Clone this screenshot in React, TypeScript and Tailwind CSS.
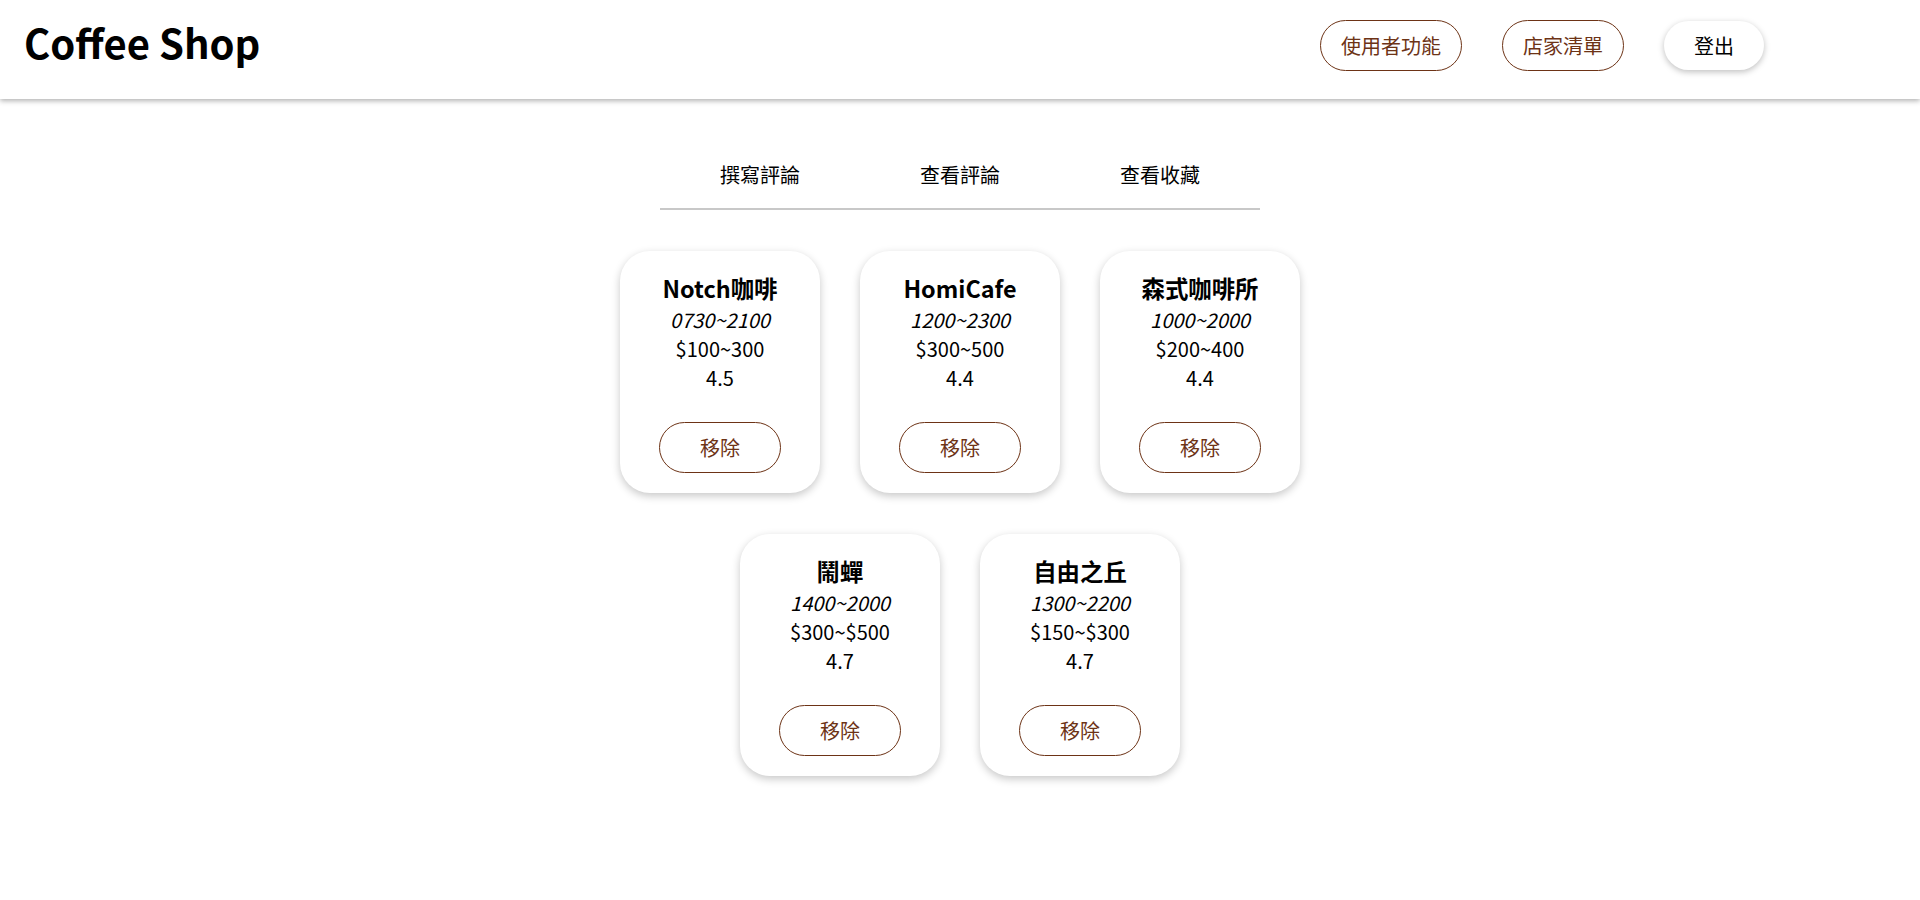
import React from "react";

const shops = [
  { name: "Notch咖啡", time: "0730~2100", price: "$100~300", rating: "4.5" },
  { name: "HomiCafe", time: "1200~2300", price: "$300~500", rating: "4.4" },
  { name: "森式咖啡所", time: "1000~2000", price: "$200~400", rating: "4.4" },
  { name: "鬧蟬", time: "1400~2000", price: "$300~$500", rating: "4.7" },
  { name: "自由之丘", time: "1300~2200", price: "$150~$300", rating: "4.7" },
];

function Card({ s }: { s: (typeof shops)[number] }) {
  return (
    <div className="w-[200px] rounded-[30px] bg-white shadow-[0_3px_8px_rgba(0,0,0,0.22)] flex flex-col items-center pt-[20px] pb-[20px] text-black">
      <div className="text-[23.4px] font-bold leading-[34px]">{s.name}</div>
      <div className="text-[20px] italic leading-[29px]">{s.time}</div>
      <div className="text-[20px] leading-[29px]">{s.price}</div>
      <div className="text-[20px] leading-[29px]">{s.rating}</div>
      <button className="mt-[30px] w-[122px] h-[51px] rounded-full border border-[#6d3316] text-[#6d3316] text-[20px] leading-[29px] bg-white">
        移除
      </button>
    </div>
  );
}

export default function App() {
  return (
    <div
      className="min-h-screen bg-white"
      style={{ fontFamily: '"Noto Sans CJK TC", "Noto Sans", sans-serif' }}
    >
      <header className="h-[99px] flex items-center justify-between pl-[24px] pr-[156px] pb-[8px] bg-white shadow-[0_2px_5px_rgba(0,0,0,0.3)] relative">
        <div className="text-[40px] font-bold leading-[58px] mb-[8px] text-black">Coffee Shop</div>
        <nav className="flex items-center gap-[40px]">
          <button className="h-[51px] px-[20px] rounded-full border border-[#6d3316] text-[#6d3316] text-[20px] leading-[29px] bg-white">
            使用者功能
          </button>
          <button className="h-[51px] px-[20px] rounded-full border border-[#6d3316] text-[#6d3316] text-[20px] leading-[29px] bg-white">
            店家清單
          </button>
          <button className="h-[49px] w-[100px] rounded-full text-black text-[20px] leading-[29px] bg-white shadow-[0_2px_6px_rgba(0,0,0,0.25)]">
            登出
          </button>
        </nav>
      </header>

      <div className="mx-auto mt-[61px] w-[600px] flex border-b-2 border-[#c8c8c8]">
        {["撰寫評論", "查看評論", "查看收藏"].map((t) => (
          <div key={t} className="w-[200px] text-center text-[20px] leading-[29px] pb-[19px] text-black">
            {t}
          </div>
        ))}
      </div>

      <div className="mx-auto mt-[41px] w-[680px] flex flex-wrap justify-center gap-x-[40px] gap-y-[41px]">
        {shops.map((s) => (
          <Card key={s.name} s={s} />
        ))}
      </div>
    </div>
  );
}
